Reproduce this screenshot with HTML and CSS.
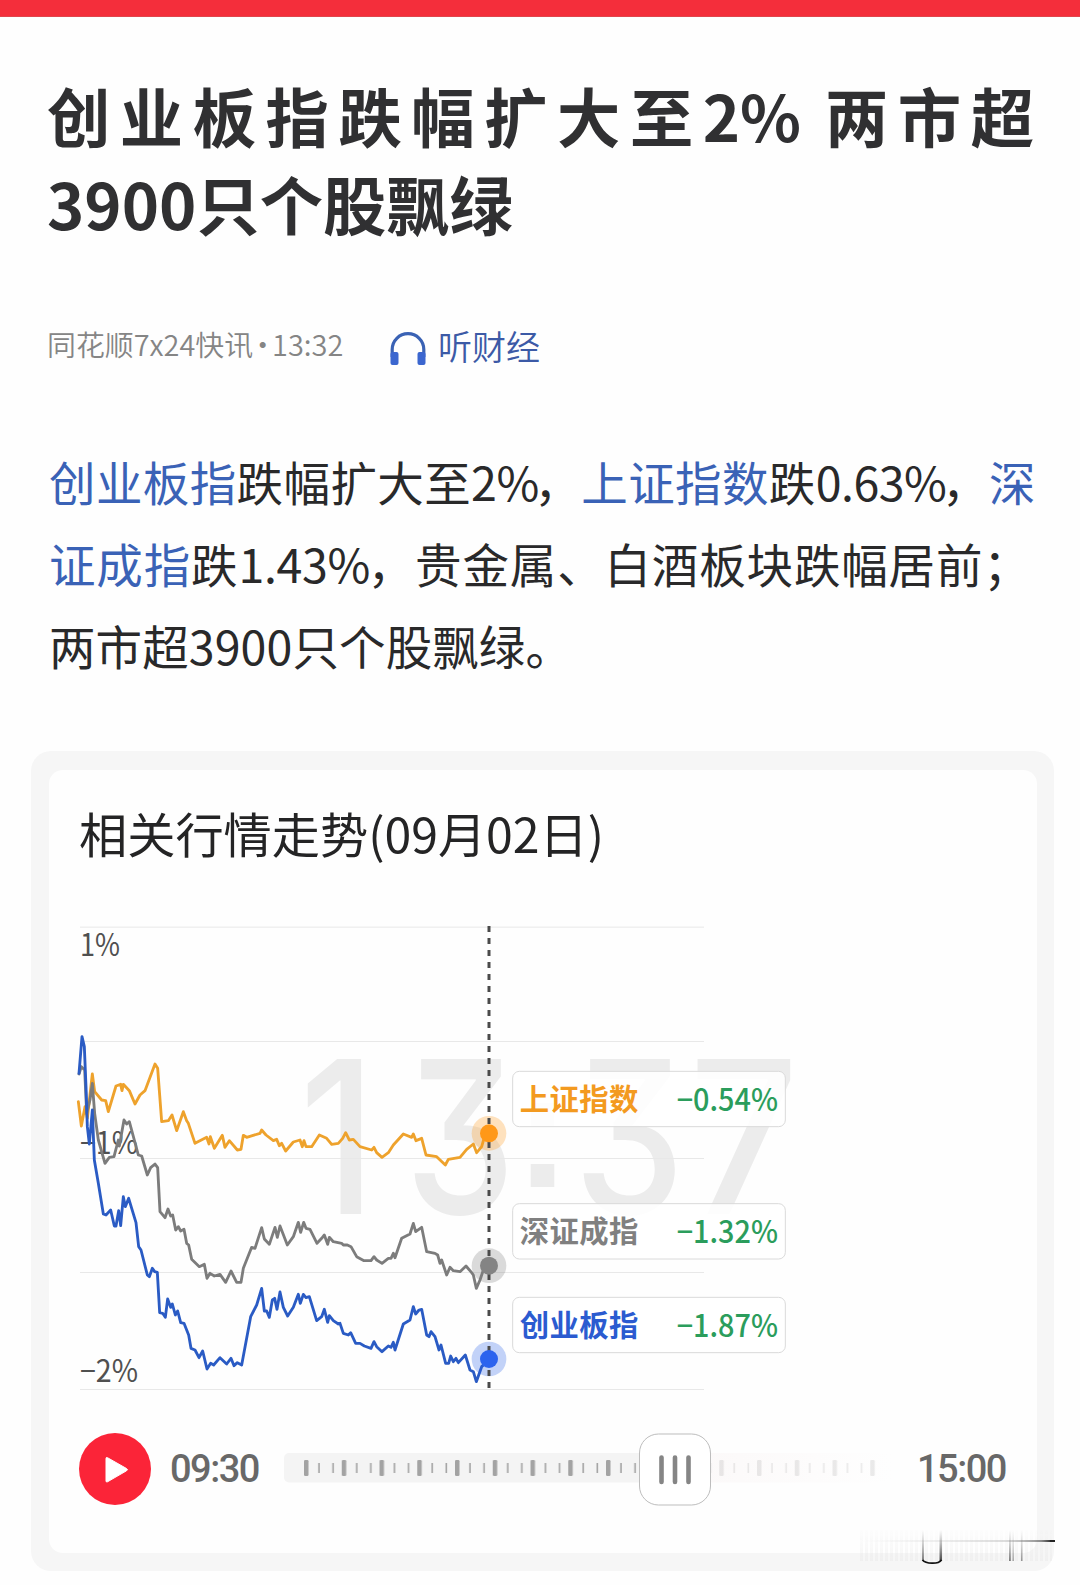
FILE: index.html
```html
<!DOCTYPE html>
<html lang="zh-CN">
<head>
<meta charset="utf-8">
<title>创业板指跌幅扩大至2% 两市超3900只个股飘绿</title>
<link rel="stylesheet" href="styles.css">
</head>
<body>
<div class="topbar"></div>
<article class="article">
  <h1 class="headline">创业板指跌幅扩大至2% 两市超3900只个股飘绿</h1>
  <div class="meta">
    <span class="source"><span>同花顺7x24快讯</span><span class="dot">·</span><span>13:32</span></span>
    <a class="listen">
      <svg class="phones" viewBox="0 0 36 33"><path d="M2.200 25V17.500a15.800 15.800 0 0 1 31.600 0V25" fill="none" stroke="#3a62b4" stroke-width="3.200"/><rect x="0.500" y="20" width="8" height="13" rx="2" fill="#3b66cf"/><rect x="27.500" y="20" width="8" height="13" rx="2" fill="#3b66cf"/></svg>
      <span>听财经</span>
    </a>
  </div>
  <div class="body">
    <div class="line l1"><a>创业板指</a>跌幅扩大至<span class="num">2%</span><span class="comma">，</span><a>上证指数</a>跌<span class="num">0.63%</span><span class="comma">，</span><a>深</a></div>
    <div class="line l2"><a>证成指</a>跌<span class="num">1.43%</span><span class="comma">，</span>贵金属、白酒板块跌幅居前；</div>
    <div class="line l3">两市超3900只个股飘绿。</div>
  </div>
</article>
<section class="card">
  <div class="panel">
    <h2 class="title">相关行情走势(09月02日)</h2>
    <svg class="chart" viewBox="0 0 2280 1500">
      <g class="watermark">
        <text x="718" y="942" textLength="230" lengthAdjust="spacingAndGlyphs">1</text><text x="1034" y="942" textLength="332" lengthAdjust="spacingAndGlyphs">3</text><text class="colon" x="1364" y="862">:</text><text x="1541" y="942" textLength="332" lengthAdjust="spacingAndGlyphs">3</text><text x="1888" y="942" textLength="328" lengthAdjust="spacingAndGlyphs">7</text>
      </g>
      <path class="grid" d="M60 81.500H1932M60 424.500H1932M60 775.500H1932M60 1117.500H1932M60 1468.500H1932"/>
      <g class="axis">
        <text x="60" y="168" textLength="120" lengthAdjust="spacingAndGlyphs">1%</text>
        <text x="60" y="761" textLength="174" lengthAdjust="spacingAndGlyphs">−1%</text>
        <text x="60" y="1445" textLength="174" lengthAdjust="spacingAndGlyphs">−2%</text>
      </g>
      <polyline class="series sh" points="55,605 64,678 75,620 82,655 97,522 104,575 125,600 137,602 145,635 168,558 182,553 186,572 190,553 208,572 225,612 240,585 255,572 285,492 293,505 305,665 325,662 336,645 350,692 370,635 380,662 385,670 405,730 440,712 447,732 451,710 463,745 487,706 495,742 508,722 532,750 543,748 550,706 560,712 600,700 605,690 618,705 640,722 650,718 658,737 665,730 677,753 700,726 720,720 727,740 732,722 738,740 755,740 778,705 800,715 815,733 835,730 848,715 857,698 868,720 880,718 900,740 935,750 942,742 950,758 966,772 985,758 1000,735 1030,702 1055,712 1060,702 1068,722 1085,715 1098,765 1130,770 1156,795 1165,778 1200,772 1220,748 1240,732 1250,758 1265,740 1275,705 1287,700"/>
      <polyline class="series sz" points="57,522 64,500 74,510 80,640 90,600 97,550 104,640 115,720 135,790 148,772 162,770 175,720 178,738 192,660 200,672 208,665 235,765 245,768 262,825 272,803 285,792 293,803 300,935 315,953 324,927 332,948 338,945 347,990 355,980 362,993 372,988 380,1030 386,1035 395,1078 418,1100 433,1093 441,1135 450,1120 463,1128 480,1123 497,1147 513,1113 530,1147 543,1147 550,1105 575,1042 585,1045 605,983 613,1017 628,1033 645,982 652,1012 660,978 682,1035 700,1010 715,967 722,997 731,967 738,985 750,988 771,1030 785,1015 793,1005 803,1033 808,1012 820,1025 845,1030 850,1035 862,1035 873,1040 890,1070 912,1082 933,1082 942,1070 950,1080 966,1090 985,1075 993,1075 1000,1060 1005,1073 1025,1015 1050,1002 1060,970 1067,995 1085,982 1100,1055 1125,1060 1133,1065 1140,1090 1145,1080 1160,1125 1170,1102 1180,1112 1200,1115 1218,1098 1235,1118 1240,1125 1249,1165 1260,1140 1270,1110 1287,1098"/>
      <polyline class="series cy" points="57,520 66,410 73,440 78,560 82,680 88,732 97,630 103,780 115,850 130,942 138,945 152,930 163,978 168,978 176,932 182,977 190,890 196,920 206,895 228,968 236,1040 243,1050 262,1125 268,1130 277,1105 284,1115 292,1117 299,1238 308,1240 316,1252 323,1197 332,1222 337,1212 346,1245 353,1233 362,1268 372,1270 386,1305 393,1345 405,1350 417,1373 428,1353 441,1407 452,1390 461,1395 480,1373 500,1392 513,1375 522,1397 532,1388 545,1395 572,1250 590,1215 605,1165 613,1233 620,1233 628,1252 637,1200 644,1195 651,1228 660,1176 670,1222 683,1248 700,1222 715,1183 721,1210 730,1183 738,1193 748,1190 770,1262 785,1250 793,1228 803,1267 808,1247 820,1262 835,1272 840,1270 850,1300 865,1305 872,1298 887,1330 900,1330 913,1338 933,1345 942,1325 950,1340 966,1355 985,1338 993,1342 1000,1327 1005,1350 1030,1272 1050,1260 1060,1220 1067,1242 1077,1230 1085,1228 1100,1305 1107,1310 1113,1295 1125,1310 1137,1350 1143,1335 1157,1390 1166,1390 1172,1368 1180,1385 1188,1375 1195,1388 1216,1365 1230,1410 1240,1415 1249,1445 1265,1400 1287,1380"/>
      <g class="halo"><circle cx="1287" cy="700" r="52" fill="#ff9a1a"/><circle cx="1287" cy="1097" r="52" fill="#808080"/><circle cx="1287" cy="1377" r="52" fill="#2a62ea"/></g>
      <path class="cursor" d="M1287 78V1465"/>
      <circle cx="1287" cy="700" r="27" fill="#ff9818"/><circle cx="1287" cy="1097" r="27" fill="#848484"/><circle cx="1287" cy="1377" r="27" fill="#2c63ee"/>
      <g class="tags">
        <rect x="1358" y="514" width="818" height="166" rx="20"/>
        <rect x="1358" y="911" width="818" height="166" rx="20"/>
        <rect x="1358" y="1192" width="818" height="166" rx="20"/>
        <text class="name" x="1379" y="630" textLength="356" fill="#f39a20">上证指数</text><text class="pct" x="1850" y="632" textLength="304" lengthAdjust="spacingAndGlyphs">−0.54%</text>
        <text class="name" x="1379" y="1027" textLength="356" fill="#808080">深证成指</text><text class="pct" x="1850" y="1029" textLength="304" lengthAdjust="spacingAndGlyphs">−1.32%</text>
        <text class="name" x="1379" y="1308" textLength="356" fill="#2b5bd0">创业板指</text><text class="pct" x="1850" y="1311" textLength="304" lengthAdjust="spacingAndGlyphs">−1.87%</text>
      </g>
    </svg>
    <div class="player">
      <button class="play"><svg viewBox="0 0 72 72"><path d="M28 25.500v22.500q0 1.500 1.500.8l19-11q2-1.200 0-2.300l-19-10.800q-1.500-.8-1.500.8z" fill="#fff" stroke="#fff" stroke-linejoin="round"/></svg></button>
      <span class="time start">09:30</span>
      <svg class="scrub" viewBox="0 0 610 74">
        <defs>
          <pattern id="ticks" x="20" y="28" width="37.750" height="16" patternUnits="userSpaceOnUse"><rect width="4.500" height="16" rx="1.200"/><rect x="14.200" y="3" width="1.600" height="10"/><rect x="28.300" y="3" width="1.600" height="10"/></pattern>
          <linearGradient id="rail"><stop offset="0" stop-color="#fbf8f8"/><stop offset="1" stop-color="#fefefe"/></linearGradient>
        </defs>
        <rect y="21" width="380" height="29.500" rx="5" fill="#f4f4f4"/>
        <rect x="380" y="21" width="228" height="29.500" fill="url(#rail)"/>
        <rect x="20" y="28" width="350" height="16" fill="url(#ticks)" opacity=".33"/>
        <rect x="427" y="28" width="168" height="16" fill="url(#ticks)" opacity=".08"/>
        <rect x="355.500" y="2" width="71" height="71" rx="19" fill="#fff" stroke="#bdbdbd"/>
        <path d="M377.500 25.500V50M391 25.500V50M404.500 25.500V50" stroke="#858585" stroke-width="4.600" stroke-linecap="round"/>
      </svg>
      <span class="time end">15:00</span>
    </div>
  </div>
  <svg class="streaks" viewBox="0 0 200 42">
    <defs>
      <linearGradient id="fadeX"><stop offset="0" stop-color="#999" stop-opacity="0"/><stop offset=".75" stop-color="#777" stop-opacity=".25"/><stop offset=".93" stop-color="#444" stop-opacity=".6"/><stop offset="1" stop-color="#000"/></linearGradient>
      <linearGradient id="fadeY" x2="0" y2="1"><stop offset="0" stop-color="#777" stop-opacity="0"/><stop offset="1" stop-color="#333" stop-opacity=".9"/></linearGradient>
      <linearGradient id="haze" x2="0" y2="1"><stop offset="0" stop-color="#ddd" stop-opacity="0"/><stop offset="1" stop-color="#ddd" stop-opacity=".3"/></linearGradient>
      <pattern id="comb" width="5" height="42" patternUnits="userSpaceOnUse"><rect width="3" height="42" fill="url(#haze)"/></pattern>
    </defs>
    <rect x="0" y="4" width="192" height="31" fill="url(#comb)"/>
    <rect x="0" y="14" width="195" height="2" fill="url(#fadeX)"/>
    <rect x="190" y="14" width="5" height="2" fill="#222"/>
    <rect x="62" y="4" width="2" height="31" fill="url(#fadeY)" opacity=".7"/><rect x="79.500" y="4" width="2.500" height="31" fill="url(#fadeY)"/>
    <path d="M62.500 34Q65 37 72 37.200T81.500 34" fill="none" stroke="#111" stroke-width="1.800"/>
    <rect x="149" y="4" width="1.800" height="31" fill="url(#fadeY)" opacity=".7"/><rect x="152.500" y="4" width="1.400" height="31" fill="url(#fadeY)" opacity=".5"/><rect x="161" y="4" width="1.500" height="31" fill="url(#fadeY)" opacity=".55"/>
  </svg>
</section>
</body>
</html>
```
FILE: styles.css
```css
* { box-sizing: border-box; }
body {
  margin: 0;
  width: 1080px;
  height: 1585px;
  overflow: hidden;
  background: #fefefe;
  color: #2b2b2c;
  font-family: "Noto Sans CJK SC", sans-serif;
}
.topbar { height: 17px; background: #f42e3b; border-bottom: 1px solid #e0454c; }
.article { height: 734px; padding: 54px 43px 0 47px; }
.headline {
  margin: 0;
  height: 176px;
  width: 987px;
  font-size: 63.3px;
  line-height: 88px;
  font-weight: 700;
  color: #303032;
  text-align: justify;
}
.meta { display: flex; align-items: center; height: 52px; margin-top: 72px; }
.source { display: flex; align-items: center; width: 343px; height: 50px; margin-top: -5px; font-size: 28.900px; font-weight: 350; color: #858585; white-space: nowrap; }
.dot { width: 19px; display: flex; justify-content: center; }
.listen { display: flex; align-items: center; gap: 12px; font-size: 34px; font-weight: 350; line-height: 50px; color: #3c5aa6; padding-top: 2px; }
.phones { width: 36px; height: 33px; margin-top: 4px; }
.body { margin: 69px 0 0 2px; font-size: 46.500px; line-height: 82px; color: #29292a; }
.body a { color: #3a62b6; }
.line { white-space: nowrap; height: 82px; }
.l1 { letter-spacing: 0.400px; }
.l1 .num { letter-spacing: -0.500px; }
.l1 .comma { letter-spacing: 0.500px; margin-left: -4.500px; }
.l2 { letter-spacing: 0.850px; }
.l2 .num { letter-spacing: -0.300px; }
.l2 .comma { letter-spacing: 1px; margin-left: -2.500px; }
.l3 { letter-spacing: 0.100px; }
.card {
  position: relative;
  width: 1023px;
  height: 820px;
  margin-left: 31px;
  padding: 19px 17px 18px 18px;
  background: #f6f6f6;
  border-radius: 20px;
}
.panel { height: 783px; padding: 27px 0 0 11px; background: #fefefe; border-radius: 14px; }
.title { margin: 0 0 0 19px; height: 70px; font-size: 48.200px; line-height: 70px; font-weight: 400; color: #242425; white-space: nowrap; }
.chart { display: block; width: 760px; height: 500px; margin-top: 33px; font-family: "Noto Sans CJK SC", sans-serif; }
.watermark { font: 550 640px Inter, sans-serif; font-feature-settings: "cv09" 1; fill: #ececec; }
.colon { font: 700 500px "Liberation Sans", sans-serif; }
.grid { stroke: #e8e8e8; stroke-width: 3; }
.axis { font-size: 92px; fill: #505050; }
.series { fill: none; stroke-width: 8.500; stroke-linejoin: round; stroke-linecap: round; }
.sh { stroke: #eea22c; }
.sz { stroke: #7c7c7c; }
.cy { stroke: #2a5bc4; }
.halo { opacity: .28; }
.cursor { stroke: #4a4a4a; stroke-width: 9; stroke-dasharray: 18 18; }
.tags rect { fill: #fff; fill-opacity: .88; stroke: #dadada; stroke-width: 3; }
.name { font-size: 88px; font-weight: 700; }
.pct { font-size: 92px; font-weight: 500; fill: #2b9d5c; }
.player { display: flex; align-items: center; height: 74px; margin-top: 32px; padding-left: 19px; }
.play { width: 72px; height: 72px; padding: 0; border: 0; border-radius: 50%; background: #fb2438; }
.play svg { display: block; width: 72px; height: 72px; margin-left: -1px; }
.time { font: 500 38px Roboto, sans-serif; letter-spacing: -1.500px; color: #686868; white-space: nowrap; }
.start { width: 114px; margin-left: 19px; }
.scrub { width: 610px; height: 74px; flex: none; }
.end { margin-left: 23px; }
.streaks { position: absolute; left: 829px; top: 775px; width: 200px; height: 42px; }
```
